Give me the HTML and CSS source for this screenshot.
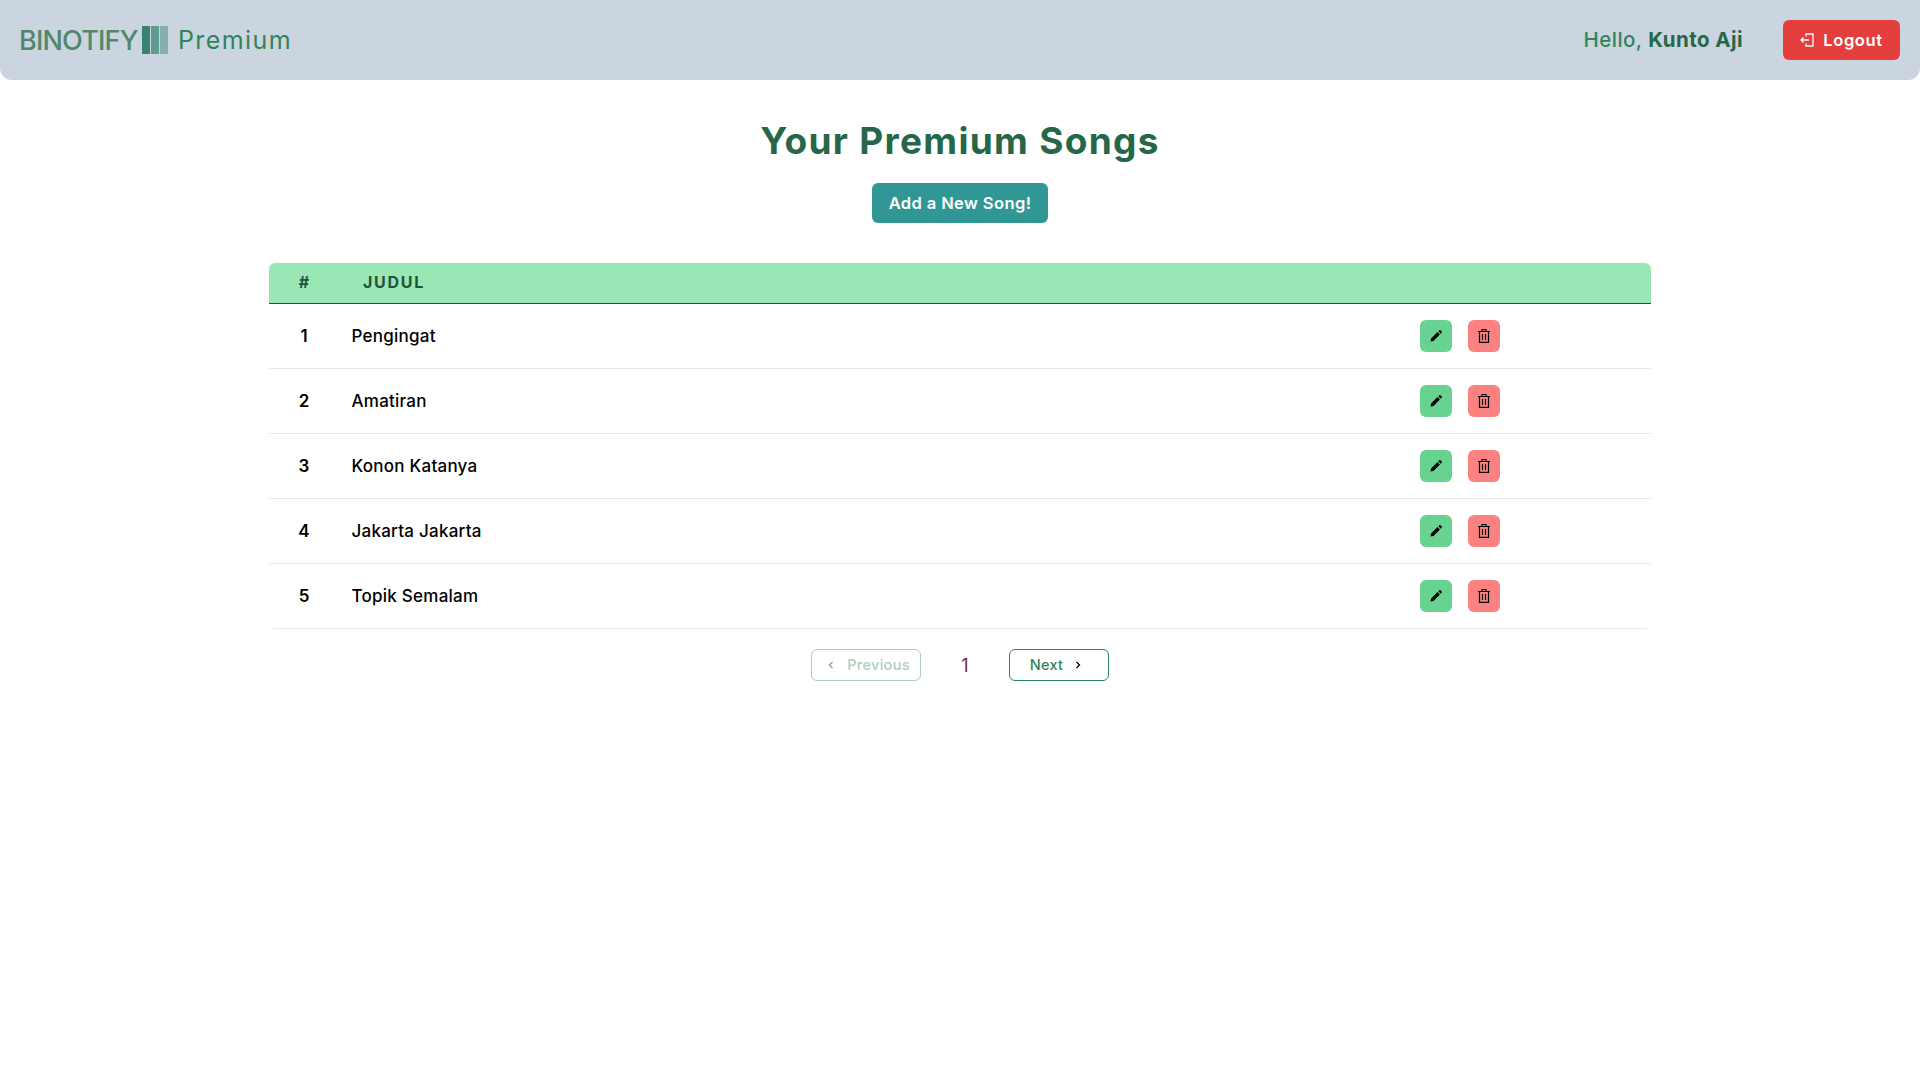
FILE: index.html
```html
<!DOCTYPE html>
<html lang="en">
<head>
<meta charset="utf-8">
<title>Binotify Premium</title>
<link rel="stylesheet" href="styles.css">
</head>
<body>
<nav class="navbar">
  <div class="brand">
    <span class="brand-name">BINOTIFY</span>
    <svg class="brand-mark" width="26" height="28" viewBox="0 0 26 28"><rect width="8" height="28" fill="#38836f"/><rect x="9" width="8" height="28" fill="#5f9a8f"/><rect x="18" width="8" height="28" fill="#85afab"/></svg>
    <span class="brand-sub">Premium</span>
  </div>
  <div class="nav-right">
    <span class="hello">Hello, <strong>Kunto Aji</strong></span>
    <button class="logout">
      <svg width="14" height="14" viewBox="0 0 14 14" fill="none" stroke="#fff" stroke-width="1.3"><path d="M6 3.5V1h7v12H6v-2.5"/><path d="M9 7H1M3.5 4.5 1 7l2.500 2.500"/></svg>
      Logout
    </button>
  </div>
</nav>
<main class="content">
  <h1 class="title">Your Premium Songs</h1>
  <button class="add">Add a New Song!</button>
  <table class="songs">
    <thead>
      <tr><th class="col-num">#</th><th class="col-title">JUDUL</th><th class="col-actions"></th></tr>
    </thead>
    <tbody>
      <tr><td class="num">1</td><td class="name">Pengingat</td><td class="actions"><div class="btns"><button class="icon edit"><svg width="14" height="14" viewBox="0 0 14 14"><path d="M1.500 12.500l.6-3 6.400-6.400 2.400 2.400-6.400 6.400zM9.300 2.300l1-1a1 1 0 0 1 1.300 0l1.100 1.100a1 1 0 0 1 0 1.300l-1 1z" fill="#000"/></svg></button><button class="icon del"><svg width="14" height="16" viewBox="0 0 14 16" fill="none" stroke="#000" stroke-width="1.200"><path d="M1 3.500h12M5 3.500V1.500h4v2M2.500 3.500v10.900h9V3.500M5.500 6v6M8.500 6v6"/></svg></button></div></td></tr>
      <tr><td class="num">2</td><td class="name">Amatiran</td><td class="actions"><div class="btns"><button class="icon edit"><svg width="14" height="14" viewBox="0 0 14 14"><path d="M1.500 12.500l.6-3 6.400-6.400 2.400 2.400-6.400 6.400zM9.300 2.300l1-1a1 1 0 0 1 1.300 0l1.100 1.100a1 1 0 0 1 0 1.300l-1 1z" fill="#000"/></svg></button><button class="icon del"><svg width="14" height="16" viewBox="0 0 14 16" fill="none" stroke="#000" stroke-width="1.200"><path d="M1 3.500h12M5 3.500V1.500h4v2M2.500 3.500v10.900h9V3.500M5.500 6v6M8.500 6v6"/></svg></button></div></td></tr>
      <tr><td class="num">3</td><td class="name">Konon Katanya</td><td class="actions"><div class="btns"><button class="icon edit"><svg width="14" height="14" viewBox="0 0 14 14"><path d="M1.500 12.500l.6-3 6.400-6.400 2.400 2.400-6.400 6.400zM9.300 2.300l1-1a1 1 0 0 1 1.300 0l1.100 1.100a1 1 0 0 1 0 1.300l-1 1z" fill="#000"/></svg></button><button class="icon del"><svg width="14" height="16" viewBox="0 0 14 16" fill="none" stroke="#000" stroke-width="1.200"><path d="M1 3.500h12M5 3.500V1.500h4v2M2.500 3.500v10.900h9V3.500M5.500 6v6M8.500 6v6"/></svg></button></div></td></tr>
      <tr><td class="num">4</td><td class="name">Jakarta Jakarta</td><td class="actions"><div class="btns"><button class="icon edit"><svg width="14" height="14" viewBox="0 0 14 14"><path d="M1.500 12.500l.6-3 6.400-6.400 2.400 2.400-6.400 6.400zM9.300 2.300l1-1a1 1 0 0 1 1.300 0l1.100 1.100a1 1 0 0 1 0 1.300l-1 1z" fill="#000"/></svg></button><button class="icon del"><svg width="14" height="16" viewBox="0 0 14 16" fill="none" stroke="#000" stroke-width="1.200"><path d="M1 3.500h12M5 3.500V1.500h4v2M2.500 3.500v10.900h9V3.500M5.500 6v6M8.500 6v6"/></svg></button></div></td></tr>
      <tr class="last"><td class="num">5</td><td class="name">Topik Semalam</td><td class="actions"><div class="btns"><button class="icon edit"><svg width="14" height="14" viewBox="0 0 14 14"><path d="M1.500 12.500l.6-3 6.400-6.400 2.400 2.400-6.400 6.400zM9.300 2.300l1-1a1 1 0 0 1 1.300 0l1.100 1.100a1 1 0 0 1 0 1.300l-1 1z" fill="#000"/></svg></button><button class="icon del"><svg width="14" height="16" viewBox="0 0 14 16" fill="none" stroke="#000" stroke-width="1.200"><path d="M1 3.500h12M5 3.500V1.500h4v2M2.500 3.500v10.900h9V3.500M5.500 6v6M8.500 6v6"/></svg></button></div></td></tr>
    </tbody>
  </table>
  <div class="rule"></div>
  <div class="pager">
    <button class="page prev"><svg width="8" height="10" viewBox="0 0 8 10" fill="none" stroke="#000" stroke-width="1.300"><path d="M5.500 2 2.500 5l3 3"/></svg>Previous</button>
    <span class="current">1</span>
    <button class="page next">Next<svg width="8" height="10" viewBox="0 0 8 10" fill="none" stroke="#000" stroke-width="1.300"><path d="M2.500 2l3 3-3 3"/></svg></button>
  </div>
</main>
</body>
</html>
```
FILE: styles.css
```css
* { box-sizing: border-box; }
html, body { margin: 0; padding: 0; background: #fff; }
body { font-family: Inter, "Noto Sans", "Liberation Sans", sans-serif; color: #000; }
button { font-family: inherit; border: 0; cursor: pointer; }

.navbar {
  height: 80px;
  background: #cbd5e0;
  border-radius: 0 0 12px 12px;
  display: flex;
  align-items: center;
  justify-content: space-between;
  padding: 0 20px 0 19px;
}
.brand { display: flex; align-items: center; }
.brand-name { font-size: 27px; font-weight: 500; color: #52876b; letter-spacing: -0.8px; line-height: 32px; width: 117px; white-space: nowrap; padding-top: 1px; }
.brand-mark { margin-left: 6px; }
.brand-sub { margin-left: 10px; font-size: 25px; font-weight: 400; color: #2f855a; letter-spacing: 1.4px; line-height: 32px; }
.nav-right { display: flex; align-items: center; gap: 40px; }
.hello { font-size: 20.500px; font-weight: 500; color: #2f855a; line-height: 28px; letter-spacing: 0.45px; }
.hello strong { font-weight: 700; color: #276749; }
.logout {
  width: 117px; height: 40px;
  background: #e53e3e; color: #fff;
  border-radius: 6px;
  font-size: 16.500px; font-weight: 600;
  display: flex; align-items: center; justify-content: center; gap: 9px;
  letter-spacing: 0.6px;
}

.content { display: flex; flex-direction: column; align-items: center; padding-top: 41px; }
.title { margin: 0; font-size: 37px; line-height: 40px; font-weight: 700; color: #276749; letter-spacing: 1.3px; }
.add {
  margin-top: 22px; width: 176px; height: 40px;
  background: #319795; color: #fff; border-radius: 6px;
  font-size: 16.500px; font-weight: 600; letter-spacing: 0.4px;
}

.songs { margin-top: 40px; width: 1382px; border-collapse: separate; border-spacing: 0; table-layout: fixed; }
.songs th { height: 41px; background: #9ae6b4; border-bottom: 1px solid #22543d; padding: 0 0 2px; font-size: 16px; font-weight: 700; color: #22543d; letter-spacing: 1.7px; text-align: left; }
.col-num { width: 70px; text-align: center !important; border-top-left-radius: 6px; letter-spacing: 0 !important; }
.col-title { padding-left: 24px !important; }
.col-actions { width: 231px; border-top-right-radius: 6px; }
.songs td { height: 65px; border-bottom: 1px solid #e2e8f0; padding: 0 0 1px; font-size: 17px; font-weight: 500; letter-spacing: 0.25px; }
.songs .last td { border-bottom: 0; height: 64px; }
.songs .num { font-weight: 600; letter-spacing: 0; padding-bottom: 1px; }
.num { text-align: center; }
.name { padding-left: 12.500px !important; }
.btns { display: flex; gap: 16px; }
.songs .actions { padding-bottom: 0; }
.icon { width: 32px; height: 32px; border-radius: 6px; display: flex; align-items: center; justify-content: center; padding: 0; }
.edit { background: #68d391; }
.del { background: #fc8181; }

.rule { width: 1374px; height: 1px; background: #e2e8f0; }
.pager { margin-top: 20px; display: flex; align-items: center; }
.page {
  height: 32px; border: 1px solid #2f855a; border-radius: 6px; background: #fff;
  color: #2f855a; font-size: 14.500px; font-weight: 500; letter-spacing: 0.3px;
  padding-top: 0; padding-bottom: 2px;
  display: flex; align-items: center; justify-content: center;
}
.page svg { position: relative; top: 1px; }
.prev { width: 110px; opacity: .4; gap: 12px; padding-left: 5px; padding-right: 0; }
.next { width: 100px; gap: 11px; padding-left: 0; padding-right: 6px; }
.current { width: 88px; padding-left: 0; text-align: center; font-size: 18px; font-weight: 400; color: #702459; }
```
